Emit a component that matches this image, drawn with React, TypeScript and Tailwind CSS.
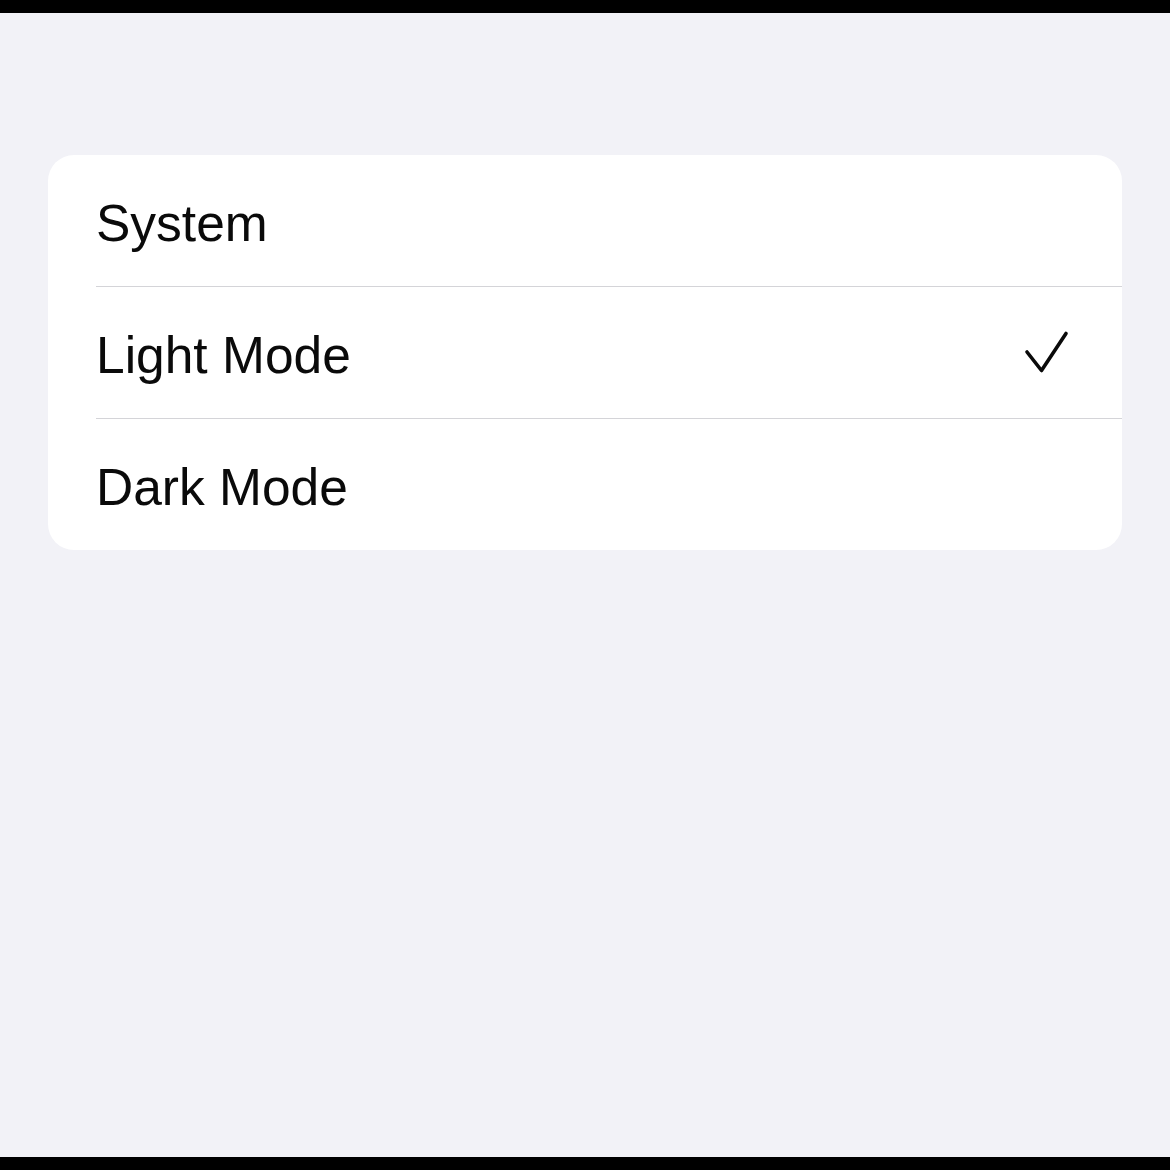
import React from "react";

const rows = [
  { label: "System", checked: false },
  { label: "Light Mode", checked: true },
  { label: "Dark Mode", checked: false },
];

export default function App() {
  return (
    <div className="w-[1170px] h-[1170px] bg-black flex flex-col">
      <div className="h-[13px] bg-black" />
      <div className="flex-1 bg-[#f2f2f7] pt-[142px] px-[48px]">
        <div className="bg-white rounded-[26px] overflow-hidden pl-[48px]">
          {rows.map((r, i) => (
            <div key={r.label}>
              {i > 0 && <div className="h-[1px] bg-[#d4d4d8]" />}
              <div className="h-[131px] flex items-center justify-between pr-[52px]">
                <span
                  className="text-[51.5px] leading-none text-[#0a0a0a] pt-[7px]"
                  style={{ fontFamily: '"Liberation Sans", Arial, sans-serif' }}
                >
                  {r.label}
                </span>
                {r.checked && (
                  <svg width="46" height="44" viewBox="0 0 46 44" className="mt-[1px]">
                    <path
                      d="M3 21 L17.5 39.5 L42 2.5"
                      fill="none"
                      stroke="#0a0a0a"
                      strokeWidth="3.6"
                      strokeLinecap="round"
                      strokeLinejoin="round"
                    />
                  </svg>
                )}
              </div>
            </div>
          ))}
        </div>
      </div>
      <div className="h-[13px] bg-black" />
    </div>
  );
}
